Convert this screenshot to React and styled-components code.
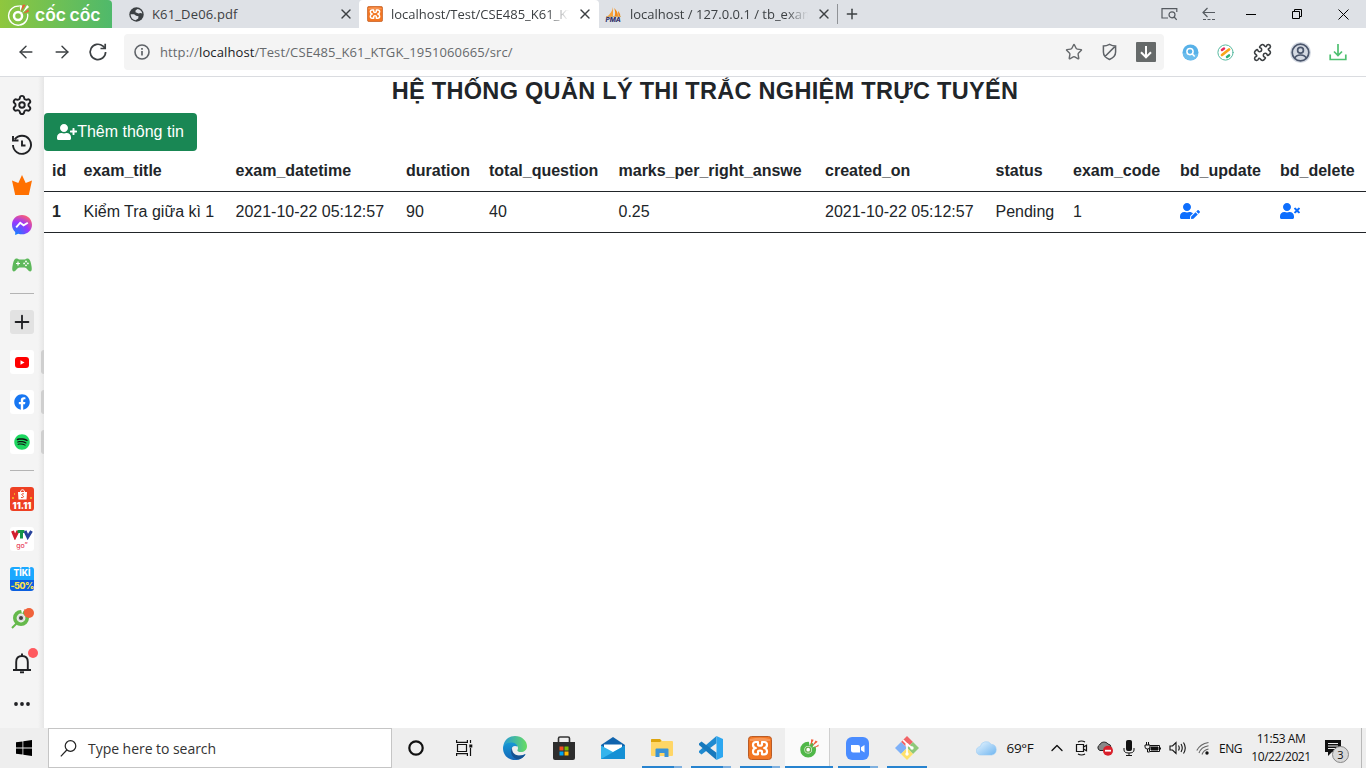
import React from "react";
import styled, { createGlobalStyle } from "styled-components";
import { Settings, Plus, X, ArrowLeft, ArrowRight, Star, Puzzle, ChevronUp } from "lucide-react";
import { FaUserPlus, FaUserEdit, FaUserTimes, FaSpotify, FaFacebook } from "react-icons/fa";

const GlobalStyle = createGlobalStyle`
  * { box-sizing: border-box; }
  body { margin: 0; background: #fff; overflow: hidden; }
  svg { display: block; flex: none; }
`;

const ui = `"Open Sans", "Noto Sans", sans-serif`;

const Window = styled.div`
  width: 1366px;
  height: 768px;
  display: flex;
  flex-direction: column;
  overflow: hidden;
  font-family: ${ui};
`;

/* ---------- title bar ---------- */
const TabStrip = styled.header`
  height: 28px;
  flex: none;
  display: flex;
  background: #dee1e6;
`;
const Brand = styled.div`
  width: 112px;
  display: flex;
  align-items: center;
  padding-left: 7px;
  gap: 5px;
  border-radius: 0 4px 0 0;
  background: linear-gradient(90deg, #8fc73e, #4fb96b);
  color: #fff;
`;
const BrandName = styled.span`
  font: 600 17.5px/28px "Inter", sans-serif;
  letter-spacing: 0;
  word-spacing: -1px;
  white-space: nowrap;
  padding-top: 2px;
`;
const Tab = styled.div`
  width: ${(p) => p.$width}px;
  display: flex;
  align-items: center;
  padding: 0 ${(p) => (p.$active ? 6 : 5)}px 0 ${(p) => p.$left}px;
  gap: 8px;
  color: #3c4043;
  background: ${(p) => (p.$active ? "#fff" : "#dee1e6")};
  border-radius: ${(p) => (p.$active ? "4px 4px 0 0" : "0 0 4px 4px")};
`;
const TabTitle = styled.span`
  flex: 1;
  min-width: 0;
  overflow: hidden;
  white-space: nowrap;
  font-size: 13px;
  line-height: 28px;
  letter-spacing: ${(p) => (p.$fade ? 0 : 0.15)}px;
  mask-image: ${(p) => (p.$fade ? "linear-gradient(90deg, #000 calc(100% - 22px), transparent)" : "none")};
`;
const NewTab = styled.div`
  display: flex;
  align-items: center;
  gap: 6px;
  flex: 1;
  color: #3c4043;
`;
const TabDivider = styled.i`
  width: 1px;
  height: 20px;
  background: #8f9296;
`;
const WindowButtons = styled.div`
  display: flex;
  align-items: center;
  padding-right: 1px;
`;
const WindowButton = styled.div`
  width: ${(p) => p.$width}px;
  height: 26px;
  display: flex;
  align-items: center;
  justify-content: center;
`;

/* ---------- address bar ---------- */
const Toolbar = styled.div`
  height: 49px;
  flex: none;
  display: flex;
  align-items: center;
  border-bottom: 1px solid #dadce0;
  color: #3c4043;
`;
const NavButtons = styled.div`
  width: 124px;
  display: flex;
  gap: 16px;
  padding-left: 16px;
`;
const AddressBar = styled.div`
  width: 1040px;
  height: 36px;
  display: flex;
  align-items: center;
  padding: 0 8px 0 10px;
  border-radius: 4px;
  background: #f4f4f4;
  color: #66696c;
`;
const Url = styled.span`
  flex: 1;
  padding-left: 10px;
  font-size: 13px;
  letter-spacing: 0.12px;
  b { font-weight: 400; color: #202124; }
`;
const AddressIcons = styled.div`
  display: flex;
  align-items: center;
  gap: 18px;
`;
const Extensions = styled.div`
  flex: 1;
  display: flex;
  align-items: center;
  justify-content: space-between;
  padding: 0 19px 0 18px;
`;

/* ---------- side bar ---------- */
const Body = styled.div`
  flex: 1;
  min-height: 0;
  display: flex;
`;
const Sidebar = styled.aside`
  width: 44px;
  flex: none;
  display: flex;
  flex-direction: column;
  align-items: center;
  padding-top: 16px;
  gap: 16px;
  background: linear-gradient(90deg, #f4f4f4 38px, #e6e6e6);
  color: #202124;
`;
const SideItem = styled.div`
  position: relative;
  width: 24px;
  height: 24px;
  flex: none;
  margin-top: ${(p) => p.$push || 0}px;
  display: flex;
  align-items: center;
  justify-content: center;
  border-radius: 3px;
  background: ${(p) => p.$bg || "transparent"};
  color: ${(p) => p.$color || "inherit"};
`;
const SideRule = styled.i`
  width: 24px;
  height: 1px;
  flex: none;
  background: #b4b4b4;
`;
const Handle = styled.i`
  position: absolute;
  left: 31px;
  top: 0;
  width: 3px;
  height: 24px;
  border-radius: 3px 0 0 3px;
  background: #cfcfcf;
`;
const Dot = styled.i`
  position: absolute;
  right: ${(p) => p.$right}px;
  top: ${(p) => p.$top}px;
  width: 10px;
  height: 10px;
  border-radius: 50%;
  background: ${(p) => p.$color};
`;
const AppTile = styled.div`
  width: 24px;
  height: 24px;
  overflow: hidden;
  border-radius: 3px;
  display: flex;
  flex-direction: column;
  align-items: center;
  justify-content: space-between;
  background: ${(p) => p.$bg};
`;
const TileText = styled.span`
  font: ${(p) => p.$weight || 800} ${(p) => p.$size}px/${(p) => p.$line}px "Inter", sans-serif;
  letter-spacing: ${(p) => p.$track || 0}px;
  color: ${(p) => p.$color};
  white-space: nowrap;
`;

/* ---------- page ---------- */
const Page = styled.main`
  flex: 1;
  min-width: 0;
  overflow: hidden;
  background: #fff;
  color: #212529;
  font: 16px/24px "Liberation Sans", Arial, sans-serif;
`;
const Heading = styled.h1`
  margin: 0 0 8px;
  height: 28px;
  text-align: center;
  font-size: 23.5px;
  line-height: 28.8px;
  font-weight: 700;
  letter-spacing: 0.3px;
  white-space: nowrap;
`;
const AddButton = styled.button`
  height: 38px;
  width: 153px;
  display: flex;
  align-items: center;
  justify-content: center;
  border: 0;
  border-radius: 4px;
  padding: 0;
  background: #198754;
  color: #fff;
  font: inherit;
  white-space: nowrap;
  svg { width: 20px; height: 16px; }
`;
const Table = styled.table`
  width: 1322px;
  table-layout: fixed;
  border-collapse: separate;
  border-spacing: 0;
`;
const Cell = styled.td`
  height: 41px;
  padding: 8px 0 8px 8px;
  border-bottom: 1px solid #212529;
  text-align: left;
  white-space: nowrap;
  vertical-align: top;
  font-weight: ${(p) => (p.$bold ? 700 : 400)};
  svg { width: 20px; height: 16px; color: #0d6efd; margin-top: 3px; }
`;

/* ---------- taskbar ---------- */
const Taskbar = styled.footer`
  height: 40px;
  flex: none;
  display: flex;
  background: #eee;
  color: #111;
`;
const StartButton = styled.div`
  width: 48px;
  display: flex;
  align-items: center;
  justify-content: center;
`;
const SearchBox = styled.div`
  width: 344px;
  display: flex;
  align-items: center;
  gap: 11px;
  padding-left: 11px;
  border: 1px solid #c5c5c5;
  background: #fff;
  font-size: 14px;
  letter-spacing: -0.04px;
  color: #333;
`;
const TaskButton = styled.div`
  position: relative;
  width: ${(p) => p.$width || 49}px;
  display: flex;
  align-items: center;
  justify-content: center;
  background: ${(p) => (p.$active ? "#fafafa" : "transparent")};
`;
const Running = styled.i`
  position: absolute;
  left: ${(p) => (p.$wide ? 0 : 5)}px;
  bottom: 0;
  height: 2px;
  width: ${(p) => (p.$wide ? 48 : 40)}px;
  background: ${(p) => (p.$multi ? "linear-gradient(90deg, #2783cf 80%, #7eb0df 80%)" : "#2783cf")};
`;
const StackEdge = styled.i`
  position: absolute;
  right: 0;
  top: 0;
  width: 4px;
  height: 38px;
  border-left: 1px solid #cfcfcf;
  background: #eee;
`;
const Tray = styled.div`
  flex: 1;
  display: flex;
  align-items: center;
  justify-content: flex-end;
`;
const TraySlot = styled.div`
  position: relative;
  width: ${(p) => p.$width}px;
  height: 40px;
  display: flex;
  align-items: center;
  justify-content: center;
  white-space: nowrap;
  font-size: ${(p) => p.$size || 12}px;
  letter-spacing: ${(p) => p.$track || 0}px;
`;
const Notifications = styled.div`
  position: relative;
  width: 44px;
  height: 40px;
  display: flex;
  align-items: center;
  padding-left: 8px;
`;
const Clock = styled.div`
  width: 72px;
  text-align: center;
  font-size: 12px;
  line-height: 18px;
  letter-spacing: -0.42px;
  white-space: nowrap;
`;
const Count = styled.span`
  position: absolute;
  left: 15px;
  top: 18px;
  width: 17px;
  height: 17px;
  border: 1px solid #888;
  border-radius: 50%;
  background: #d8d8d8;
  text-align: center;
  font-size: 11px;
  line-height: 15px;
`;
const DesktopEdge = styled.i`
  width: 5px;
  height: 40px;
  border-left: 1px solid #b8b8b8;
`;

/* ---------- drawings ---------- */
const CocCocMark = ({ size, body, ray = "#f15a38" }) => (
  <svg width={size} height={size} viewBox="0 0 24 24" fill="none">
    <path d="M13 3.3A10 10 0 1 0 21.4 11" stroke={body} strokeWidth="1.4" />
    <circle cx="11.5" cy="13.5" r="4.2" stroke={body} strokeWidth="2.6" />
    <path d="M14 8.6 13 2l3 .5zM16 10.4l5-8.2 2 2.1z" fill={body} />
    <path d="m14.8 8.8 1.6-7 3 .1zM16.8 11l5.5-4.6.5 2.6z" fill={ray} />
  </svg>
);
const CocCocSolid = ({ size }) => (
  <svg width={size} height={size} viewBox="0 0 24 24" fill="none">
    <circle cx="11" cy="14" r="7" stroke="#50b849" strokeWidth="5" />
    <circle cx="11" cy="14" r="3" fill="#fff" stroke="#62ae47" strokeWidth="1.6" />
    <path d="M12.7 9.6 11.5 2l4 0zM16 11.3 20.5 2l4 6z" fill="#fafafa" />
    <path d="m14 9 .6-7.5 3 .5zM15.8 10 20 3l2.4 1.600zM17.500 12l6-4.200V10z" fill="#f15a38" />
  </svg>
);
const Xampp = ({ size }) => (
  <svg width={size} height={size} viewBox="0 0 24 24" fill="none">
    <rect x=".5" y=".5" width="23" height="23" rx="3" fill="#f37623" stroke="#b85b26" />
    <path d="M2 3Q12 .5 22 3v2H2z" fill="#f9a46b" opacity=".7" />
    <path d="M10 6H7.800Q5 6 5 8.800T7.800 12Q5 12.500 5 15.500T7.800 18.300H10V15.800Q10 14.600 12 14.600T14 15.800V18.300h2.200Q19 18.300 19 15.500T16.200 12Q19 11.600 19 8.800T16.200 6H14V8.400Q14 9.600 12 9.600T10 8.400Z" stroke="#fff" strokeWidth="2.200" strokeLinejoin="round" />
  </svg>
);
const Globe = () => (
  <svg width="15" height="15" viewBox="0 0 15 15">
    <circle cx="7.500" cy="7.500" r="7.200" fill="#3c4043" />
    <path d="M8.500 2 6.500 3.600v1.600l3 1.200 2-.5 1.800.7A6 6 0 0 0 8.500 2zM1.600 7.300l3.500-.1 2 1.500 2.400.6-.3 2.200-2.700 1.700A6 6 0 0 1 1.600 7.300z" fill="#dee1e6" />
  </svg>
);
const SailBoat = () => (
  <svg width="17" height="17" viewBox="0 0 17 17">
    <path d="M8 1v9.500H2Q7 7 8 1z" fill="#f7a23b" />
    <path d="M9 2q4 3 4 8.500H9.500Q11 6 9 2zM13 5q3 3 2 5.500h-1.500z" fill="#f28a18" />
    <path d="M1 10.500h15" stroke="#d1a35a" strokeWidth=".8" />
    <text x="0.500" y="16" fontFamily="Inter, sans-serif" fontWeight="800" fontStyle="italic" fontSize="6.500" fill="#34346b">PMA</text>
  </svg>
);
const Reload = () => (
  <svg width="20" height="20" viewBox="0 0 20 20" fill="none" stroke="#3c4043" strokeWidth="1.7">
    <path d="M17.600 10A7.700 7.700 0 1 1 15 4.200L17 6" />
    <path d="M17.200 1.800v4.700h-4.700" />
  </svg>
);
const Info = () => (
  <svg width="16" height="16" viewBox="0 0 16 16" fill="none" stroke="#5f6368">
    <circle cx="8" cy="8" r="7" strokeWidth="1.600" />
    <path d="M8 7v4.500M8 4v1.700" strokeWidth="1.700" />
  </svg>
);
const Shield = () => (
  <svg width="17" height="18" viewBox="0 0 17 18" fill="none" stroke="#5f6368" strokeWidth="1.500">
    <path d="M8.500 1.400Q11.500 3 14.600 3v6c0 4-2.600 6-6.100 7.500C5 15 2.400 13 2.400 9V3q3 0 6.100-1.600zM13.800 3.600 4 13.500" />
  </svg>
);
const SaveBox = () => (
  <svg width="20" height="20" viewBox="0 0 20 20" fill="none">
    <rect width="20" height="20" rx="1" fill="#666a6a" />
    <path d="M10 4v11M5 10.300l5 5 5-5" stroke="#fff" strokeWidth="2" />
  </svg>
);
const BlueSearch = () => (
  <svg width="17" height="17" viewBox="0 0 17 17" fill="none">
    <circle cx="8.500" cy="8.500" r="8" fill="#57b1e8" />
    <path d="M.6 9a8 8 0 0 0 15.800 1z" fill="#79c4f0" opacity=".6" />
    <circle cx="8" cy="7.600" r="3.100" stroke="#fff" strokeWidth="1.500" />
    <path d="m10.300 10 2.400 2.600" stroke="#fff" strokeWidth="1.500" />
  </svg>
);
const ColorStripes = () => (
  <svg width="17" height="17" viewBox="0 0 17 17" fill="none" strokeLinecap="round">
    <circle cx="8.500" cy="8.500" r="7.600" fill="#fff" stroke="#56b9a0" />
    <path d="m5 6 2-1.500" stroke="#e72a5d" strokeWidth="2.500" />
    <path d="m5 11 7-5.500" stroke="#f9a51a" strokeWidth="2.800" />
    <path d="m10 13 2-1.600" stroke="#2eb178" strokeWidth="2.500" />
  </svg>
);
const Profile = () => (
  <svg width="21" height="21" viewBox="0 0 21 21" fill="none" stroke="#4b566c" strokeWidth="1.700">
    <circle cx="10.500" cy="10.500" r="10.500" fill="#d5dae3" stroke="none" />
    <circle cx="10.500" cy="10.500" r="8.300" />
    <circle cx="10.500" cy="8.300" r="2.900" />
    <path d="M4.800 16.200q1-3.200 5.700-3.200t5.700 3.200" />
  </svg>
);
const Download = () => (
  <svg width="18" height="18" viewBox="0 0 18 18" fill="none" stroke="#4fc071" strokeWidth="1.700">
    <path d="M9 1v11M5 8.500l4 4 4-4M1.200 11.500v5h15.600v-5" />
  </svg>
);
const ScreenSearch = () => (
  <svg width="17" height="14" viewBox="0 0 17 14" fill="none" stroke="#555a60" strokeWidth="1.200">
    <path d="M7 11H1V1.600h14.800V5" />
    <circle cx="11" cy="7.800" r="3" />
    <path d="m13.200 10 2.500 2.800" />
  </svg>
);
const DashedBack = () => (
  <svg width="14" height="14" viewBox="0 0 14 14" fill="none" stroke="#555a60" strokeWidth="1.200">
    <path d="M13 5.500H1M5.500 1 1 5.500 5.500 10" />
    <path d="M1 12.500h13" strokeDasharray="3 1.500" />
  </svg>
);
const Restore = () => (
  <svg width="12" height="12" viewBox="0 0 12 12" fill="none" stroke="#000">
    <path d="M1.500 3.500h7v7h-7zM3.500 3.500v-2h7v7h-2" />
  </svg>
);
const CloseGlyph = () => (
  <svg width="11" height="11" viewBox="0 0 11 11" stroke="#000"><path d="m.5.5 10 10m0-10-10 10" /></svg>
);
const History = () => (
  <svg width="22" height="22" viewBox="0 0 22 22" fill="none" stroke="#202124" strokeWidth="1.900">
    <path d="M3.800 5.400A9 9 0 1 1 2 11" />
    <path d="M2 2v4.500h5.500M11 6.500v5h3.500" />
  </svg>
);
const Crown = () => (
  <svg width="20" height="20" viewBox="0 0 20 20" fill="#ff7000">
    <path d="m10 0 3.700 8L20 5.500 16.800 20H3.200L0 5.500 6.300 8z" />
  </svg>
);
const Messenger = () => (
  <svg width="20" height="20" viewBox="0 0 20 20">
    <defs>
      <radialGradient id="msgr" cx=".2" cy="1" r="1.100">
        <stop offset="0" stopColor="#0a84ff" /><stop offset=".6" stopColor="#9a36ff" /><stop offset="1" stopColor="#ff5f70" />
      </radialGradient>
    </defs>
    <path d="M10 0C4.300 0 0 4.200 0 9.700c0 3 1.200 5.500 3.200 7.200V20l3-1.300c1.200.4 2.500.6 3.800.6 5.700 0 10-4.200 10-9.600S15.700 0 10 0z" fill="url(#msgr)" />
    <path d="m4.200 12.300 4-4.600 3.400 2.600 4.200-2.600" fill="none" stroke="#fff" strokeWidth="1.900" />
  </svg>
);
const Gamepad = () => (
  <svg width="20" height="14" viewBox="0 0 20 14">
    <path d="M4 .5Q5.500 0 7 1.500h6Q14.500 0 16 .5q2 .5 3 5 1.200 5.500.500 7-1.500 2.300-4-1Q14 9.500 12.500 9.500h-5Q6 9.500 4.500 11.500q-2.500 3.300-4 1-.7-1.500.5-7Q2 1 4 .5z" fill="#5db85b" />
    <path d="M6 3.500v4M4 5.500h4" stroke="#fff" strokeWidth="1.200" />
    <g fill="#fff"><circle cx="14" cy="3.500" r=".9" /><circle cx="14" cy="7.300" r=".9" /><circle cx="12.100" cy="5.400" r=".9" /><circle cx="15.900" cy="5.400" r=".9" /></g>
  </svg>
);
const BellGlyph = () => (
  <svg width="20" height="22" viewBox="0 0 20 22" fill="none" stroke="#202124" strokeWidth="1.900">
    <path d="M4.200 17V10Q4.200 4 10 4t5.800 6v7M1 18h18M10 4V1.500" /><path d="M8 20.300h4" />
  </svg>
);
const YouTube = () => (
  <svg width="14" height="11" viewBox="0 0 14 11"><rect width="14" height="11" rx="3" fill="#f00" /><path d="M5.500 3.200v4.600l4-2.300z" fill="#fff" /></svg>
);
const ShopBag = () => (
  <svg width="24" height="13" viewBox="0 0 24 13" fill="none">
    <path d="M8 5h9l-.5 7.500h-8z" fill="#fff" />
    <path d="M10.500 5c0-3 4-3 4 0" stroke="#fff" />
    <path d="M14 7c-2-1-3 .8-1.500 1.500S14 11 11 10.500" stroke="#ee4d2d" />
    <path d="M2 11h2M20 11h2M4 7h1" stroke="#f5a623" strokeWidth="2" />
  </svg>
);
const VtvMark = () => (
  <svg width="24" height="13" viewBox="0 0 24 13" fill="none" strokeWidth="3">
    <path d="m2.500 4 2.500 6 3-6" stroke="#d3202f" /><path d="M7.500 4.500h7M11.500 4v7.500" stroke="#159447" /><path d="m15 4 2.800 6L21.500 4" stroke="#27429b" />
  </svg>
);
const CocCocPin = () => (
  <svg width="22" height="22" viewBox="0 0 22 22" fill="none">
    <path d="m1 20 5-5" stroke="#65b94b" strokeWidth="2" />
    <circle cx="10" cy="10" r="6.200" stroke="#65b94b" strokeWidth="3.600" />
    <circle cx="10" cy="10" r="3.600" fill="#ddd" /><circle cx="10" cy="10" r="2" fill="#444" />
    <path d="m11 6-1-5 3 1zM14 9l5-3v3z" fill="#fff" /><path d="m12.500 6 1-5 2 1z" fill="#f15a38" />
  </svg>
);
const DotsRow = () => (
  <svg width="16" height="4" viewBox="0 0 16 4" fill="#202124"><circle cx="2" cy="2" r="1.900" /><circle cx="8" cy="2" r="1.900" /><circle cx="14" cy="2" r="1.900" /></svg>
);
const WindowsLogo = () => (
  <svg width="16" height="16" viewBox="0 0 16 16"><path d="M0 2.300 6.500 1.400v6.200H0zM7.300 1.300 16 0v7.600H7.300zM0 8.400h6.500v6.200L0 13.700zM7.300 8.400H16V16l-8.700-1.300z" /></svg>
);
const SearchGlyph = () => (
  <svg width="17" height="17" viewBox="0 0 17 17" fill="none" stroke="#222" strokeWidth="1.200"><circle cx="10.500" cy="6" r="5.300" /><path d="m6.800 10-6 6.300" /></svg>
);
const Cortana = () => (
  <svg width="16" height="16" viewBox="0 0 16 16"><circle cx="8" cy="8" r="6.700" fill="none" stroke="#111" strokeWidth="2.200" /></svg>
);
const TaskView = () => (
  <svg width="17" height="16" viewBox="0 0 17 16" fill="none" stroke="#111" strokeWidth="1.200">
    <path d="M1.500 4.500h9v7h-9zM.6 0v2.400h10.800V0M.6 16v-2.400h10.800V16M14.500 0v3M14.500 8v8" /><path d="M13.300 4.500h3v3h-3z" fill="#111" stroke="none" />
  </svg>
);
const Edge = () => (
  <svg width="24" height="24" viewBox="0 0 24 24">
    <defs>
      <linearGradient id="edgeTop"><stop offset="0" stopColor="#2499d8" /><stop offset="1" stopColor="#68dc62" /></linearGradient>
      <linearGradient id="edgeBase" x2="0" y2="1"><stop offset="0" stopColor="#1798d5" /><stop offset="1" stopColor="#1467b8" /></linearGradient>
    </defs>
    <path d="M0 13C0 5 5 0 12 0s12 5 12 10c0 4-3 6-6 6s-4-1-3.500-2c1.500-3-.5-6-4.500-6-5 0-8 2-10 5z" fill="url(#edgeTop)" />
    <path d="M0 12c1-3 4-5.500 8-5.500 3 0 6 1.500 6.500 4C10 8.500 7.500 12 9 16c1.500 3.500 6 5.500 13.500 2C20 22 17 24 12 24 5 24 0 19 0 12z" fill="url(#edgeBase)" />
    <path d="M9 11.500c-3 5 1 12.300 7 11.800 3-.8 5-2.500 6.600-5.100-7 3.200-14 .8-13.600-6.700z" fill="#145292" />
  </svg>
);
const Store = () => (
  <svg width="24" height="24" viewBox="0 0 24 24">
    <path d="M6.500 7V2.500Q6.500 1 8 1h8q1.500 0 1.500 1.500V7" fill="none" stroke="#333" strokeWidth="1.600" />
    <path d="M1 6h22v16q0 2-2 2H3q-2 0-2-2z" fill="#2d2d2d" />
    <path d="M7.500 10.500h4v4h-4z" fill="#f25022" /><path d="M12.500 10.500h4v4h-4z" fill="#7fba00" /><path d="M7.500 15.500h4v4h-4z" fill="#00a4ef" /><path d="M12.500 15.500h4v4h-4z" fill="#ffb900" />
  </svg>
);
const Mail = () => (
  <svg width="24" height="24" viewBox="0 0 24 24">
    <path d="M0 9 12 1l12 8v4H0z" fill="#1064ae" /><path d="M3 8.500h18v8H3z" fill="#fff" />
    <path d="M0 9.500 12 16 24 9.500V23H0z" fill="#34b4ec" /><path d="M0 23 24 9.500V23z" fill="#1590d5" />
  </svg>
);
const Explorer = () => (
  <svg width="22" height="20" viewBox="0 0 22 20">
    <path d="M0 1.500Q0 1 1 1h8l2 2h10q1 0 1 1v13q0 1-1 1H1q-1 0-1-1z" fill="#ffd666" /><path d="M0 1.500Q0 1 1 1h8l1.500 2L9 4H0z" fill="#dda40d" />
    <path d="M4.500 19v-7.500q0-1 1-1h11q1 0 1 1V19h-4v-4h-5v4z" fill="#3a93d6" />
  </svg>
);
const VSCode = () => (
  <svg width="24" height="24" viewBox="0 0 24 24">
    <path d="M17.500 0v7.200L2.500 18.500 0 16.500v-1.500z" fill="#1f8ad0" />
    <path d="M17.500 24v-7.200L2.500 5.500 0 7.500V9z" fill="#1679bd" />
    <path d="m17.500 0 6.500 3v18l-6.500 3z" fill="#2da7f0" />
  </svg>
);
const Zoom = () => (
  <svg width="23" height="23" viewBox="0 0 23 23"><rect width="23" height="23" rx="6" fill="#4a8cff" /><path d="M5 8h7q2 0 2 2v5.500H7q-2 0-2-2zM15 10.300 18.500 8v7.500L15 13.200z" fill="#fff" /></svg>
);
const GitBash = () => (
  <svg width="24" height="24" viewBox="0 0 24 24">
    <path d="m12 0 6 6-6 6-6-6z" fill="#f16467" /><path d="m6 6 6 6-6 6-6-6z" fill="#7fb1f8" /><path d="m18 6 6 6-6 6-6-6z" fill="#8ec879" /><path d="m12 12 6 6-6 6-6-6z" fill="#ffe16b" />
    <path d="m8 4 4 4v10M12 8l5 4" stroke="#fff" strokeWidth="1.700" fill="none" /><circle cx="12" cy="9" r="1.700" fill="#fff" /><circle cx="17" cy="12" r="1.700" fill="#fff" /><circle cx="12" cy="18" r="1.700" fill="#fff" />
  </svg>
);
const Cloud = () => (
  <svg width="21" height="16" viewBox="0 0 22 17">
    <defs><linearGradient id="cloud" x2="1" y2="1"><stop offset="0" stopColor="#eaf6ff" /><stop offset="1" stopColor="#6eb5f0" /></linearGradient></defs>
    <path d="M5 16a4.500 4.500 0 0 1-.7-9A6.500 6.500 0 0 1 16 4.500 5.800 5.800 0 0 1 16.500 16z" fill="url(#cloud)" stroke="#9ccbf2" strokeWidth=".6" />
  </svg>
);
const MeetNow = () => (
  <svg width="14" height="16" viewBox="0 0 14 16" fill="none" stroke="#111" strokeWidth="1.200"><path d="M1.500 4.500h7v7h-7zM8.500 7l3-1.800v5.600l-3-1.800M3 2q3.500-2 7 0M3 14q3.500 2 7 0" /></svg>
);
const CloudBlocked = () => (
  <svg width="18" height="16" viewBox="0 0 18 16"><path d="M4 10.500A3 3 0 0 1 3.500 5 5 5 0 0 1 12 4a3.500 3.500 0 0 1 3 3.500v3z" fill="#888" stroke="#222" /><circle cx="12" cy="10.700" r="5" fill="#d9202b" /><path d="M9 10.700h6" stroke="#fff" strokeWidth="1.800" /></svg>
);
const Mic = () => (
  <svg width="12" height="16" viewBox="0 0 12 16" fill="none" stroke="#111"><rect x="3.500" y=".5" width="5" height="10" rx="1" fill="#111" /><path d="M1 8v2q0 3 5 3t5-3V8M6 13v3M3 15.500h6" /></svg>
);
const Battery = () => (
  <svg width="18" height="12" viewBox="0 0 18 12" fill="none" stroke="#111"><path d="M5.500 3.500h10v6h-10zM16.500 5.500v2" /><path d="M7 5h7v3H7z" fill="#111" /><path d="M1 3h5v2q0 2-2.500 2T1 5zM2.500 0v3M4.500 0v3M3.500 7v3h2" fill="#eee" /></svg>
);
const Speaker = () => (
  <svg width="18" height="14" viewBox="0 0 18 14" fill="none" stroke="#111" strokeWidth="1.100"><path d="M1 5h2.500L7 1.500v11L3.500 9H1zM9.500 4.500q1.500 2.500 0 5M12 3q2.500 4 0 8M14.500 1.500q3.500 5.500 0 11" /></svg>
);
const Wifi = () => (
  <svg width="14" height="14" viewBox="0 0 14 14" fill="none" stroke="#666" strokeWidth="1.100"><path d="M.8 9.500Q4 3 12.500 1.500M3 12Q5 6 12.500 4.700M6 13.500q1.500-4.500 6.500-5.500" /><circle cx="11" cy="12" r="1.700" fill="#111" stroke="none" /></svg>
);
const Notes = () => (
  <svg width="16" height="16" viewBox="0 0 16 16"><path d="M0 0h16v12H7l-4 4v-4H0z" fill="#111" /><path d="M3 3.500h10M3 6h10M3 8.500h7" stroke="#eee" /></svg>
);

const columns = [
  ["id", 31.5], ["exam_title", 152], ["exam_datetime", 170.5], ["duration", 83], ["total_question", 129.5],
  ["marks_per_right_answe", 206.5], ["created_on", 170.5], ["status", 77.5], ["exam_code", 107], ["bd_update", 100], ["bd_delete", 94],
];
const record = ["1", "Kiểm Tra giữa kì 1", "2021-10-22 05:12:57", "90", "40", "0.25", "2021-10-22 05:12:57", "Pending", "1",
  <FaUserEdit />, <FaUserTimes />];

const CloseTab = () => <X size={16} strokeWidth={2} />;

export default function App() {
  return (
    <Window>
      <GlobalStyle />
      <TabStrip>
        <Brand>
          <CocCocMark size={23} body="#fff" />
          <BrandName>cốc cốc</BrandName>
        </Brand>
        <Tab $width={247} $left={17}>
          <Globe /><TabTitle>K61_De06.pdf</TabTitle><CloseTab />
        </Tab>
        <Tab $width={240} $left={8} $active>
          <Xampp size={16} /><TabTitle $fade>localhost/Test/CSE485_K61_KTGK</TabTitle><CloseTab />
        </Tab>
        <Tab $width={238} $left={6}>
          <SailBoat /><TabTitle $fade>localhost / 127.0.0.1 / tb_exam</TabTitle><CloseTab />
        </Tab>
        <NewTab><TabDivider /><Plus size={16} strokeWidth={2.2} /></NewTab>
        <WindowButtons>
          <WindowButton $width={40}><ScreenSearch /></WindowButton>
          <WindowButton $width={40}><DashedBack /></WindowButton>
          <WindowButton $width={44}><svg width="10" height="1"><path d="M0 .5h10" stroke="#000" /></svg></WindowButton>
          <WindowButton $width={48}><Restore /></WindowButton>
          <WindowButton $width={44}><CloseGlyph /></WindowButton>
        </WindowButtons>
      </TabStrip>

      <Toolbar>
        <NavButtons>
          <ArrowLeft size={20} strokeWidth={1.7} /><ArrowRight size={20} strokeWidth={1.7} /><Reload />
        </NavButtons>
        <AddressBar>
          <Info />
          <Url>http://<b>localhost</b>/Test/CSE485_K61_KTGK_1951060665/src/</Url>
          <AddressIcons><Star size={18} strokeWidth={1.9} /><Shield /><SaveBox /></AddressIcons>
        </AddressBar>
        <Extensions>
          <BlueSearch /><ColorStripes /><Puzzle size={19} strokeWidth={2} />
          <Profile /><Download />
        </Extensions>
      </Toolbar>

      <Body>
        <Sidebar>
          <SideItem><Settings size={22} strokeWidth={2.1} /></SideItem>
          <SideItem><History /></SideItem>
          <SideItem><Crown /></SideItem>
          <SideItem><Messenger /></SideItem>
          <SideItem><Gamepad /></SideItem>
          <SideRule />
          <SideItem $bg="#e2e2e2"><Plus size={22} strokeWidth={2} /></SideItem>
          <SideItem $bg="#fff"><YouTube /><Handle /></SideItem>
          <SideItem $bg="#fff" $color="#1877f2"><FaFacebook size={16} /><Handle /></SideItem>
          <SideItem $bg="radial-gradient(circle, #111 6px, #fff 7px)" $color="#1ed760"><FaSpotify size={16} /><Handle /></SideItem>
          <SideRule />
          <SideItem>
            <AppTile $bg="#ee4023"><ShopBag /><TileText $size={9} $line={11} $weight={900} $color="#fff">11.11</TileText></AppTile>
          </SideItem>
          <SideItem>
            <AppTile $bg="#fff"><VtvMark /><TileText $size={7} $line={11} $weight={500} $color="#e8435b">go”</TileText></AppTile>
          </SideItem>
          <SideItem>
            <AppTile $bg="linear-gradient(#1ba8ff 54%, #0b5fe0 54%)">
              <TileText $size={8.5} $line={13} $color="#fff">TİKİ</TileText>
              <TileText $size={9} $line={11} $track={-0.6} $weight={800} $color="#ffe34d">-50%</TileText>
            </AppTile>
          </SideItem>
          <SideItem><CocCocPin /><Dot $right={0} $top={1} $color="#f0623a" /></SideItem>
          <SideItem $push={4}><BellGlyph /><Dot $right={-4} $top={-3} $color="#ff5a5f" /></SideItem>
          <SideItem $push={1}><DotsRow /></SideItem>
        </Sidebar>

        <Page>
          <Heading>HỆ THỐNG QUẢN LÝ THI TRẮC NGHIỆM TRỰC TUYẾN</Heading>
          <AddButton><FaUserPlus />Thêm thông tin</AddButton>
          <Table>
            <colgroup>{columns.map(([name, width]) => <col key={name} width={width} />)}</colgroup>
            <thead><tr>{columns.map(([name]) => <Cell as="th" $bold key={name}>{name}</Cell>)}</tr></thead>
            <tbody><tr>{record.map((value, i) => <Cell key={columns[i][0]} $bold={i === 0}>{value}</Cell>)}</tr></tbody>
          </Table>
        </Page>
      </Body>

      <Taskbar>
        <StartButton><WindowsLogo /></StartButton>
        <SearchBox><SearchGlyph />Type here to search</SearchBox>
        <TaskButton $width={48}><Cortana /></TaskButton>
        <TaskButton><TaskView /></TaskButton>
        <TaskButton $width={51}><Edge /></TaskButton>
        <TaskButton $width={48}><Store /></TaskButton>
        <TaskButton><Mail /></TaskButton>
        <TaskButton><Explorer /><Running $multi /></TaskButton>
        <TaskButton><VSCode /><Running $multi /></TaskButton>
        <TaskButton $width={50}><Xampp size={24} /><Running $multi /></TaskButton>
        <TaskButton $width={48} $active><CocCocSolid size={20} /><StackEdge /><Running $wide /></TaskButton>
        <TaskButton><Zoom /><Running $multi /></TaskButton>
        <TaskButton><GitBash /><Running /></TaskButton>
        <Tray>
          <TraySlot $width={26}><Cloud /></TraySlot>
          <TraySlot $width={42} $size={13.5} $track={-0.3}>69°F</TraySlot>
          <TraySlot $width={31}><ChevronUp size={20} strokeWidth={1.6} /></TraySlot>
          <TraySlot $width={20}><MeetNow /></TraySlot>
          <TraySlot $width={26}><CloudBlocked /></TraySlot>
          <TraySlot $width={22}><Mic /></TraySlot>
          <TraySlot $width={26}><Battery /></TraySlot>
          <TraySlot $width={24}><Speaker /></TraySlot>
          <TraySlot $width={26}><Wifi /></TraySlot>
          <TraySlot $width={29} $track={-0.4}>ENG</TraySlot>
          <Clock>11:53 AM<br />10/22/2021</Clock>
          <Notifications><Notes /><Count>3</Count></Notifications>
          <DesktopEdge />
        </Tray>
      </Taskbar>
    </Window>
  );
}
